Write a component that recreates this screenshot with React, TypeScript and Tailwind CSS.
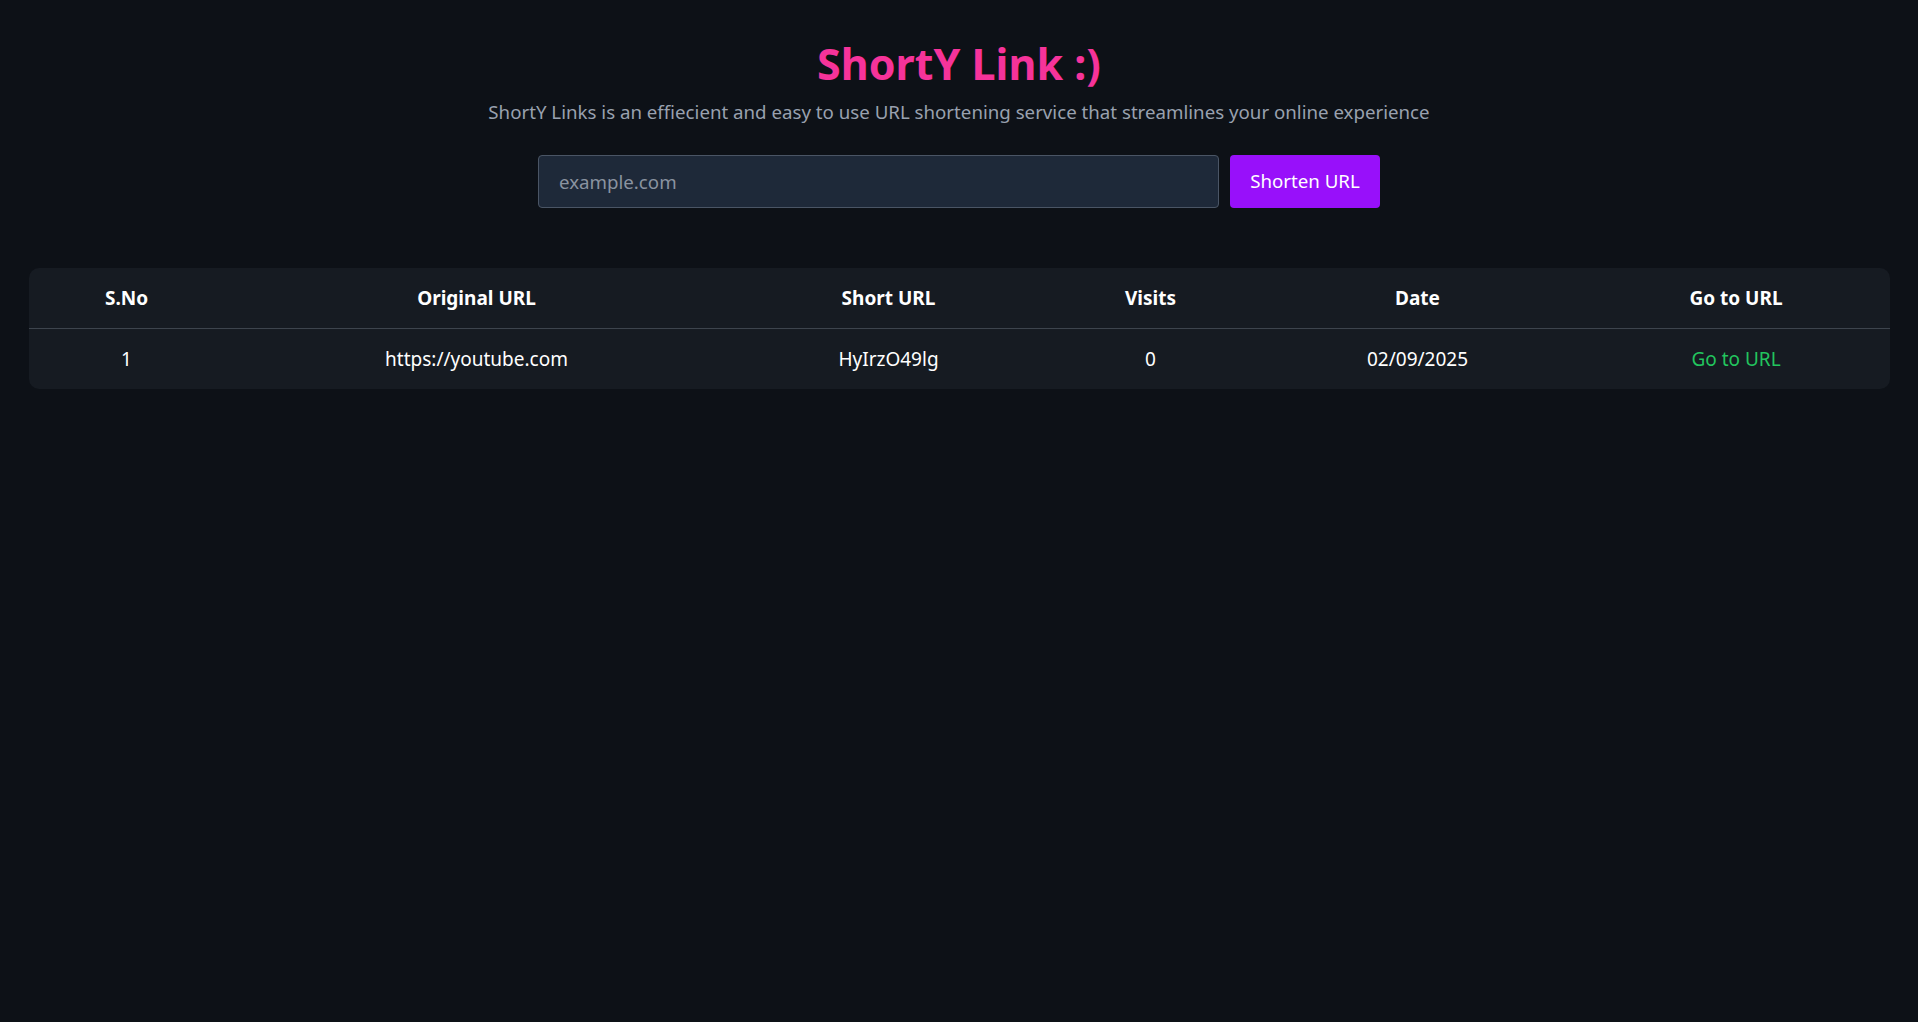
export default function App() {
  const rows = [
    { id: 1, original: "https://youtube.com", short: "HyIrzO49lg", visits: 0, date: "02/09/2025" },
  ];

  return (
    <div
      className="min-h-screen bg-[#0d1117] text-white"
      style={{ fontFamily: '"Segoe UI", "Noto Sans", sans-serif' }}
    >
      <div className="flex flex-col items-center pt-[42px]">
        <h1 className="text-[43px] font-bold leading-[44px] text-[#f6339a]">ShortY Link :)</h1>
        <p className="mt-[12px] text-[18.7px] leading-[28px] text-[#99a1af]">
          ShortY Links is an effiecient and easy to use URL shortening service that streamlines your online experience
        </p>

        <form className="mt-[29px] flex gap-[11px]" onSubmit={(e) => e.preventDefault()}>
          <input
            type="text"
            placeholder="example.com"
            className="h-[53px] w-[681px] rounded-[4px] border border-[#4a5565] bg-[#1e2939] px-5 text-[18.7px] text-white placeholder:text-[#8a93a0] focus:outline-none"
          />
          <button className="h-[53px] w-[150px] rounded-[4px] bg-[#9810fa] text-[18.7px] text-white">
            Shorten URL
          </button>
        </form>
      </div>

      <div className="mx-auto mt-[60px] w-[1861px] overflow-hidden rounded-[10px] bg-[#161b22]">
        <table className="w-full table-fixed text-center text-[19px]">
          <colgroup>
            <col className="w-[196px]" />
            <col className="w-[504px]" />
            <col className="w-[320px]" />
            <col className="w-[204px]" />
            <col className="w-[330px]" />
            <col />
          </colgroup>
          <thead>
            <tr className="border-b border-[#3d444d]">
              <th className="h-[60px] font-bold">S.No</th>
              <th className="font-bold">Original URL</th>
              <th className="font-bold">Short URL</th>
              <th className="font-bold">Visits</th>
              <th className="font-bold">Date</th>
              <th className="font-bold">Go to URL</th>
            </tr>
          </thead>
          <tbody>
            {rows.map((r) => (
              <tr key={r.id}>
                <td className="h-[61px]">{r.id}</td>
                <td>{r.original}</td>
                <td>{r.short}</td>
                <td>{r.visits}</td>
                <td>{r.date}</td>
                <td>
                  <a href="#" className="text-[#22c55e]">Go to URL</a>
                </td>
              </tr>
            ))}
          </tbody>
        </table>
      </div>
    </div>
  );
}
